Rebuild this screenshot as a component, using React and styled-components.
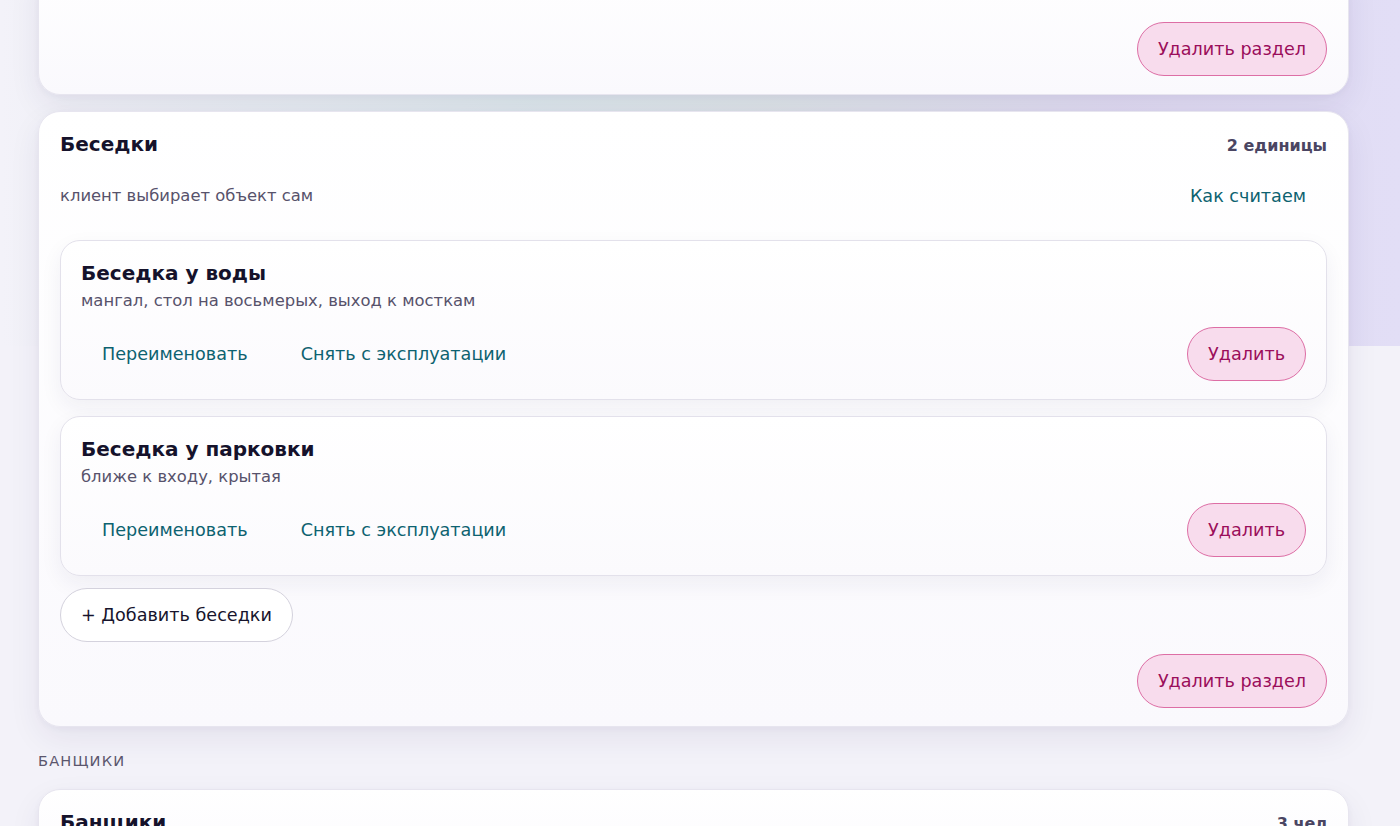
import React from "react";
import styled, { createGlobalStyle } from "styled-components";

const GlobalStyle = createGlobalStyle`
  html, body {
    margin: 0;
    padding: 0;
  }
  body {
    font-family: "DejaVu Sans", "Liberation Sans", sans-serif;
    color: #15122b;
    background-color: #f3f2f9;
    background-image: linear-gradient(
      90deg,
      rgba(238, 237, 248, 0) 0%,
      rgba(214, 228, 232, 0.75) 38%,
      rgba(216, 224, 228, 0.8) 55%,
      rgba(220, 214, 240, 0.85) 80%,
      rgba(226, 222, 246, 1) 100%
    );
    background-size: 100% 346px;
    background-repeat: no-repeat;
    min-height: 100vh;
    overflow: hidden;
  }
`;

const Page = styled.main`
  padding: 0 51px 40px 38px;
  display: flex;
  flex-direction: column;
`;

const Card = styled.section`
  border: 1px solid #e7e5ef;
  border-radius: 22px;
  background: linear-gradient(180deg, #ffffff 0%, #faf9fd 100%);
  box-shadow: 0 12px 32px rgba(40, 30, 90, 0.07), 0 2px 6px rgba(40, 30, 90, 0.04);
  padding: ${(p) => (p.$continued ? "61px" : "20px")} 21px 18px;
  margin-top: ${(p) => (p.$continued ? "-40px" : p.$afterLabel ? "19px" : "16px")};
  display: flex;
  flex-direction: column;
`;

const CardHeader = styled.div`
  display: flex;
  justify-content: space-between;
  align-items: baseline;
`;

const CardTitle = styled.h2`
  margin: 0;
  font-size: 20px;
  line-height: 24px;
  font-weight: 700;
  color: #15122b;
`;

const Count = styled.span`
  font-size: 16px;
  font-weight: 700;
  color: #4a4562;
`;

const SubRow = styled.div`
  margin-top: 13px;
  display: flex;
  justify-content: space-between;
  align-items: center;
`;

const Muted = styled.p`
  margin: 0;
  font-size: 16.4px;
  line-height: 22px;
  color: #57526b;
`;

const Button = styled.button`
  font-family: inherit;
  font-size: 17.6px;
  line-height: 20px;
  padding: 16px 20px;
  border-radius: 999px;
  border: 1px solid transparent;
  background: transparent;
  color: #0d6270;
  cursor: pointer;
  white-space: nowrap;

  ${(p) =>
    p.$variant === "danger" &&
    `
    background: #f8dced;
    border-color: #dd6ea5;
    color: #9b0e5b;
  `}

  ${(p) =>
    p.$variant === "outline" &&
    `
    background: #ffffff;
    border-color: #d4d2dd;
    color: #17142c;
  `}
`;

const ItemList = styled.div`
  margin-top: 17px;
  display: flex;
  flex-direction: column;
  gap: 16px;
`;

const Item = styled.article`
  border: 1px solid #e3e1eb;
  border-radius: 20px;
  background: linear-gradient(180deg, #ffffff 0%, #fbfafd 100%);
  box-shadow: 0 8px 22px rgba(40, 30, 90, 0.06);
  padding: 20px 20px 18px;
`;

const ItemTitle = styled.h3`
  margin: 0;
  font-size: 20px;
  line-height: 24px;
  font-weight: 700;
  color: #15122b;
`;

const ItemNote = styled(Muted)`
  margin-top: 5px;
`;

const Actions = styled.div`
  margin-top: 15px;
  display: flex;
  align-items: center;
  gap: 11px;
`;

const Spacer = styled.div`
  flex: 1;
`;

const AddRow = styled.div`
  margin-top: 12px;
  display: flex;
`;

const Footer = styled.div`
  margin-top: ${(p) => (p.$flush ? "0" : "12px")};
  display: flex;
  justify-content: flex-end;
`;

const SectionLabel = styled.div`
  margin-top: 25px;
  font-size: 14.6px;
  line-height: 18px;
  letter-spacing: 0.08em;
  text-transform: uppercase;
  color: #5b566d;
`;

const gazebos = [
  { name: "Беседка у воды", note: "мангал, стол на восьмерых, выход к мосткам" },
  { name: "Беседка у парковки", note: "ближе к входу, крытая" },
];

function ObjectItem({ name, note }) {
  return (
    <Item>
      <ItemTitle>{name}</ItemTitle>
      <ItemNote>{note}</ItemNote>
      <Actions>
        <Button>Переименовать</Button>
        <Button>Снять с эксплуатации</Button>
        <Spacer />
        <Button $variant="danger">Удалить</Button>
      </Actions>
    </Item>
  );
}

export default function App() {
  return (
    <>
      <GlobalStyle />
      <Page>
        <Card $continued>
          <Footer $flush>
            <Button $variant="danger">Удалить раздел</Button>
          </Footer>
        </Card>

        <Card>
          <CardHeader>
            <CardTitle>Беседки</CardTitle>
            <Count>2 единицы</Count>
          </CardHeader>
          <SubRow>
            <Muted>клиент выбирает объект сам</Muted>
            <Button>Как считаем</Button>
          </SubRow>
          <ItemList>
            {gazebos.map((g) => (
              <ObjectItem key={g.name} {...g} />
            ))}
          </ItemList>
          <AddRow>
            <Button $variant="outline">+ Добавить беседки</Button>
          </AddRow>
          <Footer>
            <Button $variant="danger">Удалить раздел</Button>
          </Footer>
        </Card>

        <SectionLabel>Банщики</SectionLabel>
        <Card $afterLabel>
          <CardHeader>
            <CardTitle>Банщики</CardTitle>
            <Count>3 чел</Count>
          </CardHeader>
          <SubRow>
            <Muted>мастер парения на выбор гостя</Muted>
          </SubRow>
        </Card>
      </Page>
    </>
  );
}
